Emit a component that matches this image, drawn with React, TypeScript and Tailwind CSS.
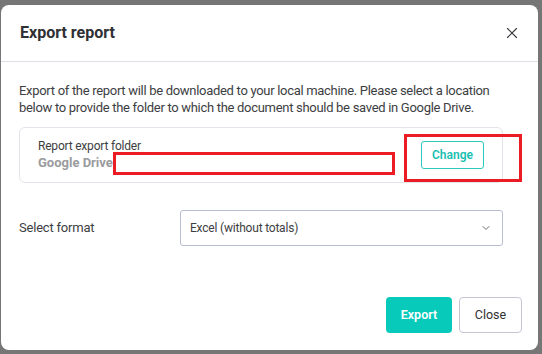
import { X, ChevronDown } from 'lucide-react';

export default function App() {
  return (
    <div className="w-[542px] h-[354px] bg-[#767676] pt-[5px] pl-[1px] overflow-hidden" style={{ fontFamily: 'Roboto, "Noto Sans", sans-serif' }}>
      <div className="w-[537px] h-[345px] bg-white rounded-lg flex flex-col">
        {/* header */}
        <div className="h-[57px] flex items-center justify-between pl-[19px] pr-[17px] border-b border-[#dedfe6]">
          <h2 className="text-[16px] font-bold text-[#2f3033]">Export report</h2>
          <X size={18} strokeWidth={1.5} className="text-[#3a3b40]" />
        </div>

        {/* body */}
        <div className="pl-[18px] pr-[35px] pt-[20px] flex-1">
          <p className="text-[13px] leading-[17px] text-[#3d3e42] tracking-[-0.3px]">
            Export of the report will be downloaded to your local machine. Please select a location below to provide the folder to which the document should be saved in Google Drive.
          </p>

          <div className="relative mt-[11px] h-[56px] border border-[#e3e4ea] rounded-md flex items-center justify-between pl-[18px] pr-[18px]">
            <div className="flex flex-col">
              <span className="text-[12px] leading-[15px] text-[#3d3e42] tracking-[-0.2px]">Report export folder</span>
              <span className="text-[13px] leading-[18px] font-bold text-[#9a9b9e]">Google Drive</span>
            </div>
            <button className="h-[28px] px-[10px] border border-[#2cc9bd] rounded-[3px] text-[12px] font-semibold text-[#18bfb2]">
              Change
            </button>
            <div className="absolute left-[93px] top-[24px] w-[282px] h-[23px] border-[3px] border-[#ec1c24] bg-white" />
            <div className="absolute left-[384px] top-[6px] w-[118px] h-[48px] border-[3px] border-[#ec1c24]" />
          </div>

          <div className="mt-[27px] flex items-center">
            <span className="w-[161px] text-[13px] text-[#3d3e42] tracking-[-0.2px]">Select format</span>
            <div className="flex-1 h-[36px] border border-[#b9bdd1] rounded-[3px] flex items-center justify-between pl-[9px] pr-[10px]">
              <span className="text-[12px] text-[#3d3e42] tracking-[-0.2px]">Excel (without totals)</span>
              <ChevronDown size={12} strokeWidth={2} className="text-[#6b6d75]" />
            </div>
          </div>
        </div>

        {/* footer */}
        <div className="flex justify-end gap-[7px] pr-[16px] pb-[17px]">
          <button className="h-[36px] w-[66px] bg-[#08cabb] rounded-[4px] text-white text-[12.5px] font-semibold">Export</button>
          <button className="h-[36px] w-[63px] border border-[#c4c6d6] rounded-[4px] text-[#2f3033] text-[12.5px]">Close</button>
        </div>
      </div>
    </div>
  );
}
